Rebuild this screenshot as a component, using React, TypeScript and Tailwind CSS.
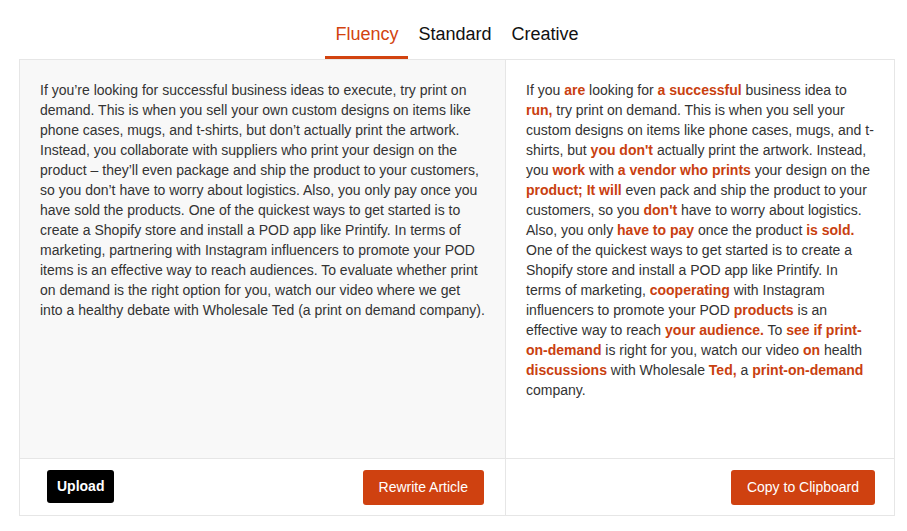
import { useState } from 'react';

const tabs = ['Fluency', 'Standard', 'Creative'];

const original =
  'If you’re looking for successful business ideas to execute, try print on demand. This is when you sell your own custom designs on items like phone cases, mugs, and t-shirts, but don’t actually print the artwork. Instead, you collaborate with suppliers who print your design on the product – they’ll even package and ship the product to your customers, so you don’t have to worry about logistics. Also, you only pay once you have sold the products. One of the quickest ways to get started is to create a Shopify store and install a POD app like Printify. In terms of marketing, partnering with Instagram influencers to promote your POD items is an effective way to reach audiences. To evaluate whether print on demand is the right option for you, watch our video where we get into a healthy debate with Wholesale Ted (a print on demand company).';

// [text, changed]
const rewritten: [string, boolean][] = [
  ['If you ', false],
  ['are', true],
  [' looking for ', false],
  ['a successful', true],
  [' business idea to ', false],
  ['run,', true],
  [' try print on demand. This is when you sell your custom designs on items like phone cases, mugs, and t-shirts, but ', false],
  ["you don't", true],
  [' actually print the artwork. Instead, you ', false],
  ['work', true],
  [' with ', false],
  ['a vendor who prints', true],
  [' your design on the ', false],
  ['product; It will', true],
  [' even pack and ship the product to your customers, so you ', false],
  ["don't", true],
  [' have to worry about logistics. Also, you only ', false],
  ['have to pay', true],
  [' once the product ', false],
  ['is sold.', true],
  [' One of the quickest ways to get started is to create a Shopify store and install a POD app like Printify. In terms of marketing, ', false],
  ['cooperating', true],
  [' with Instagram influencers to promote your POD ', false],
  ['products', true],
  [' is an effective way to reach ', false],
  ['your audience.', true],
  [' To ', false],
  ['see if print-on-demand', true],
  [' is right for you, watch our video ', false],
  ['on', true],
  [' health ', false],
  ['discussions', true],
  [' with Wholesale ', false],
  ['Ted,', true],
  [' a ', false],
  ['print-on-demand', true],
  [' company.', false],
];

export default function App() {
  const [active, setActive] = useState('Fluency');

  return (
    <div className="min-h-screen bg-white font-['Liberation_Sans',Arial,sans-serif] text-[#333]">
      <div className="ml-[19px] w-[876px]">
        <div className="flex h-[59px] justify-center">
          {tabs.map((t) => (
            <button
              key={t}
              onClick={() => setActive(t)}
              className={`flex h-full items-start px-[10px] pt-[21px] text-[18px] leading-[27px] border-b-[3px] ${
                active === t ? 'border-[#d2430f] text-[#d2430f]' : 'border-transparent text-[#111]'
              }`}
            >
              {t}
            </button>
          ))}
        </div>

        <div className="grid grid-cols-[486px_1fr] border border-[#e6e6e6]">
          <div className="h-[399px] border-r border-b border-[#e6e6e6] bg-[#f8f8f8] px-5 pt-5 text-[14px] leading-5">
            {original}
          </div>
          <div className="h-[399px] border-b border-[#e6e6e6] bg-white px-5 pt-5 text-[14px] leading-5">
            {rewritten.map(([s, c], i) =>
              c ? (
                <span key={i} className="font-bold text-[#c9400f]">
                  {s}
                </span>
              ) : (
                <span key={i}>{s}</span>
              )
            )}
          </div>

          <div className="flex h-[56px] items-start justify-between border-r border-[#e6e6e6] pl-[27px] pr-[21px] pt-[11px]">
            <button className="h-[33px] rounded-[3px] bg-black px-[10px] text-[14px] font-bold text-white">
              Upload
            </button>
            <button className="h-[35px] rounded-[3px] bg-[#cf4110] px-4 text-[14px] text-white">
              Rewrite Article
            </button>
          </div>
          <div className="flex h-[56px] items-start justify-end pr-[19px] pt-[11px]">
            <button className="h-[35px] rounded-[3px] bg-[#cf4110] px-4 text-[14px] text-white">
              Copy to Clipboard
            </button>
          </div>
        </div>
      </div>
    </div>
  );
}
